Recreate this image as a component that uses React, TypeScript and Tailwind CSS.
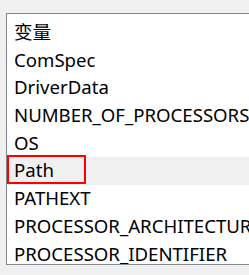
const rows = [
  '变量',
  'ComSpec',
  'DriverData',
  'NUMBER_OF_PROCESSORS',
  'OS',
  'Path',
  'PATHEXT',
  'PROCESSOR_ARCHITECTURE',
  'PROCESSOR_IDENTIFIER',
];

export default function App() {
  return (
    <div className="w-[249px] h-[275px] overflow-hidden bg-[#f0f0f0] pt-[13px] pl-[6px]">
      <div
        className="w-[300px] h-[252px] overflow-hidden bg-white border border-[#828790] pt-[4.5px]"
        style={{ fontFamily: '"Noto Sans", "Noto Sans CJK SC", sans-serif' }}
      >
        {rows.map((r) => (
          <div
            key={r}
            className={`relative h-[27.7px] flex items-center pl-[7px] text-[18.6px] leading-none text-black whitespace-nowrap ${
              r === 'Path' ? 'bg-[#f0f0f0]' : ''
            }`}
          >
            {r}
            {r === 'Path' && (
              <div className="absolute left-0 top-[-1.5px] w-[79px] h-[29px] border-2 border-[#ff0000]" />
            )}
          </div>
        ))}
      </div>
    </div>
  );
}
